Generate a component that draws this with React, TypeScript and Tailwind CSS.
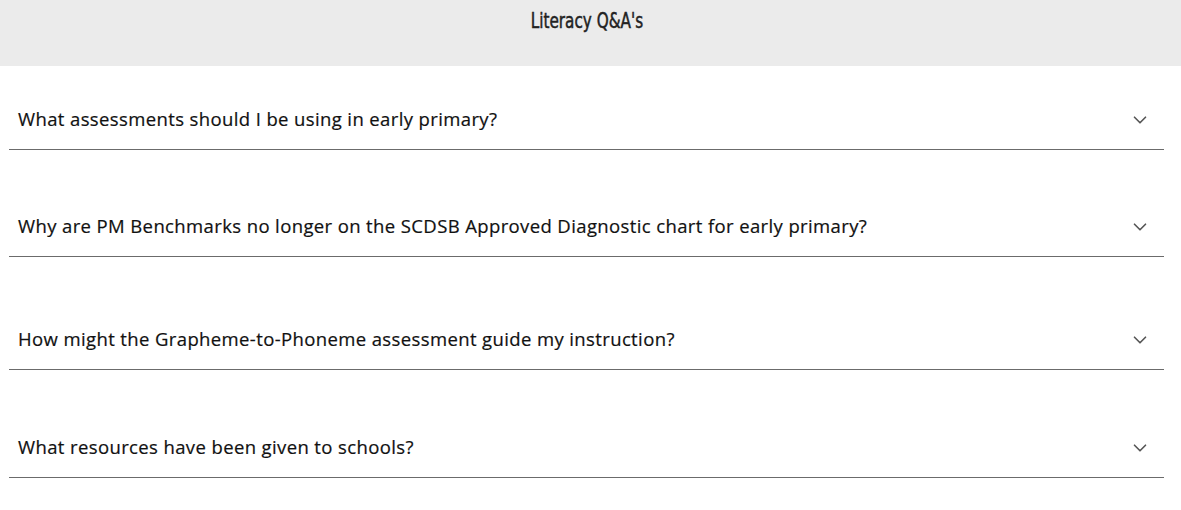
import React from 'react';
import { ChevronDown } from 'lucide-react';

const questions = [
  { q: 'What assessments should I be using in early primary?', mt: 'mt-[23px]' },
  { q: 'Why are PM Benchmarks no longer on the SCDSB Approved Diagnostic chart for early primary?', mt: 'mt-[46px]' },
  { q: 'How might the Grapheme-to-Phoneme assessment guide my instruction?', mt: 'mt-[52px]' },
  { q: 'What resources have been given to schools?', mt: 'mt-[47px]' },
];

const App: React.FC = () => {
  return (
    <div className="w-[1181px] h-[510px] bg-white overflow-hidden">
      <div className="h-[66px] bg-[#ebebeb] flex justify-center pt-[7px] pr-[8px]">
        <h1 className="text-[22px] leading-[28px] font-normal text-[#222] font-['DejaVu_Sans_Condensed',sans-serif] scale-x-[0.77] [-webkit-text-stroke:0.5px_#222]">
          Literacy Q&amp;A's
        </h1>
      </div>
      <div className="pl-[9px] pr-[17px]">
        {questions.map((item, idx) => (
          <div key={idx} className={`${item.mt} border-b border-[#6b6b6b]`}>
            <div className="h-[60px] flex items-center justify-between pl-[9px] pr-[13px]">
              <span className="text-[18.5px] leading-[24px] font-medium tracking-[0.38px] text-[#111] font-['Open_Sans',sans-serif] [-webkit-text-stroke:0.2px_#111]">{item.q}</span>
              <ChevronDown size={22} strokeWidth={1.8} className="text-[#555] mt-[1px]" />
            </div>
          </div>
        ))}
      </div>
    </div>
  );
};

export default App;
